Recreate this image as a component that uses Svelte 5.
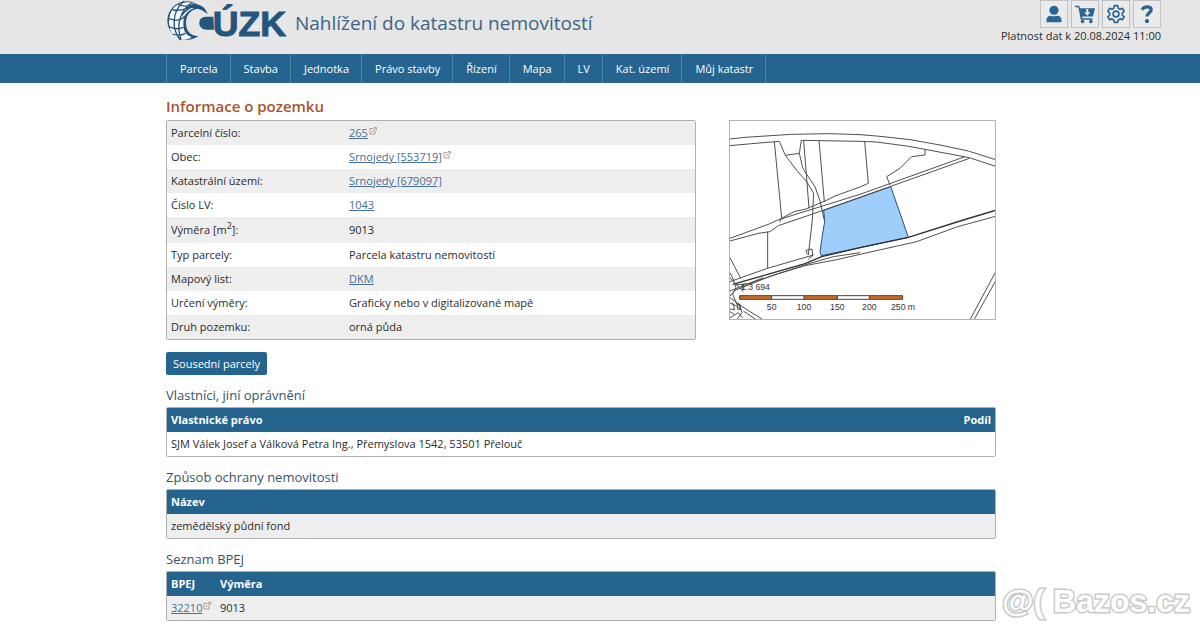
<script>
  const menu = ['Parcela', 'Stavba', 'Jednotka', 'Právo stavby', 'Řízení', 'Mapa', 'LV', 'Kat. území', 'Můj katastr'];
  const info = [
    { label: 'Parcelní číslo:', value: '265', link: true, ext: true },
    { label: 'Obec:', value: 'Srnojedy [553719]', link: true, ext: true },
    { label: 'Katastrální území:', value: 'Srnojedy [679097]', link: true },
    { label: 'Číslo LV:', value: '1043', link: true },
    { label: 'Výměra [m', sup: '2', after: ']:', value: '9013' },
    { label: 'Typ parcely:', value: 'Parcela katastru nemovitostí' },
    { label: 'Mapový list:', value: 'DKM', link: true },
    { label: 'Určení výměry:', value: 'Graficky nebo v digitalizované mapě' },
    { label: 'Druh pozemku:', value: 'orná půda' }
  ];
</script>

{#snippet external()}
  <svg class="ext" viewBox="0 0 16 16" aria-hidden="true">
    <path d="M9 3H2v11h10V7M6 10l8-8M10 1h5v5" fill="none" stroke="#b08c88" stroke-width="1.7" />
  </svg>
{/snippet}

<header>
  <a class="brand" href="#top" aria-label="ČÚZK">
    <svg viewBox="18 0 387 129">
      <circle cx="80" cy="62" r="58" fill="#24557c" />
      <path d="M90 7C52 2 27 28 27 65c0 27 13 46 33 53 15 3 27 0 35-7-18-5-26-20-25-43 1-27 18-43 44-47C108 13 100 9 90 7Z" fill="#f5f9fb" />
      <path d="M72 4C35 34 34 87 61 120M96 7C64 30 46 69 63 119M111 15C91 20 75 32 66 45M38 30c24 3 43 0 63-19M27 56c18 7 36 5 48-8M27 80c16 8 30 8 43 2M38 102c13 5 27 4 38-2M54 14c17 6 36 5 52-2" fill="none" stroke="#24557c" stroke-width="4" />
      <path d="M109 27c-20 5-31 20-31 41 0 24 13 40 38 40 10 0 20-3 28-9V46l-3-7c-7-10-18-15-32-12Z" fill="#e6e6e6" />
      <path d="M90 14c28-5 46 6 53 29-15-14-29-19-54-20Z" fill="#24557c" />
      <path d="M160 50h-22c-14 1-20 8-20 19 0 12 8 20 22 20h22Z" fill="#24557c" />
      <text x="158" y="108" class="logotext">ÚZK</text>
    </svg>
  </a>
  <h1>Nahlížení do katastru nemovitostí</h1>
  <div class="tools">
    <div class="buttons">
      <button aria-label="Přihlášení">
        <svg viewBox="0 0 24 24"><circle cx="12" cy="7.5" r="5.5" /><path d="M3 22v-2.500c0-4 2.500-5.500 5.500-5.500 2 1 5 1 7 0 3 0 5.500 1.500 5.500 5.500V22Z" /></svg>
      </button>
      <button aria-label="Košík">
        <svg viewBox="0 0 24 24"><path fill-rule="evenodd" d="M0 2h5l1 3h18l-2.500 10H8.500l.4 2H21v2H7L4 4H0ZM13.500 6v4H11l3.800 4 3.700-4H16V6Z" /><circle cx="9" cy="21" r="2.200" /><circle cx="19" cy="21" r="2.200" /></svg>
      </button>
      <button aria-label="Nastavení">
        <svg viewBox="0 0 24 24" fill="none" stroke="#2a6594" stroke-width="2"><path stroke-linejoin="round" d="M10 2h4l.7 3 2.100 1.200 3-1 2 3.500-2.300 2.200v2.300l2.300 2.100-2 3.500-3-.9-2.100 1.200L14 22h-4l-.7-2.900-2.100-1.200-3 .9-2-3.500 2.300-2.100v-2.300L2.200 8.700l2-3.500 3 1L9.300 5Z" /><circle cx="12" cy="12" r="3.500" /></svg>
      </button>
      <button aria-label="Nápověda">
        <svg viewBox="0 0 24 24"><path d="M6 7c1.500-3 4-3.500 6.500-3.500 3 0 4.500 1.500 4.500 3.500 0 3.500-5 3.500-5 8" fill="none" stroke="#2a6594" stroke-width="4" /><circle cx="12" cy="20.500" r="2.600" /></svg>
      </button>
    </div>
    <span>Platnost dat k 20.08.2024 11:00</span>
  </div>
</header>

<nav>
  {#each menu as item}
    <a href="#menu">{item}</a>
  {/each}
</nav>

<main>
  <h2 class="title">Informace o pozemku</h2>
  <div class="overview">
    <table class="info">
      <tbody>
        {#each info as row}
          <tr class:tall={row.sup}>
            <th scope="row">{row.label}{#if row.sup}<sup>{row.sup}</sup>{row.after}{/if}</th>
            <td>
              {#if row.link}<a href="#detail">{row.value}</a>{:else}{row.value}{/if}{#if row.ext}{@render external()}{/if}
            </td>
          </tr>
        {/each}
      </tbody>
    </table>

    <svg class="map" viewBox="0 0 795 594" role="img" aria-label="Mapa">
      <path d="M281 268L482 197L512 282L535 349L390 380L274 404L270 394L276 350L284 302Z" fill="#9fcefb" stroke="#24507c" stroke-width="3" />
      <g fill="none" stroke="#505050" stroke-width="3">
        <path d="M0 54L45 49L185 40L300 38L390 41L450 46L540 56L630 72L715 90L800 117" />
        <path d="M0 74L65 68L148 61L166 103L208 97L214 58L390 61L440 63L530 75L585 85L718 110L800 137" />
        <path d="M133 61L155 291" />
        <path d="M166 103L200 148L230 182L251 217L247 297L235 402" />
        <path d="M208 97L218 140L228 157L255 197L270 240L284 302" />
        <path d="M221 58L237 262M267 58L283 242" />
        <path d="M404 61L415 187L390 198L315 225L285 240L225 265L195 271L150 294L115 310L0 352" />
        <path d="M705 107L390 220L165 290L150 297V304" />
        <path d="M718 112L390 229L245 280L145 314L120 332L85 337L0 360" />
        <path d="M113 332V442" />
        <path d="M585 85V102L545 107L510 142L470 167L480 192" />
        <path d="M0 482L112 442L250 402L235 414M232 400L228 388L246 384L248 402" />
        <path stroke="#303030" stroke-width="4" d="M800 267L700 297L535 349L390 380L275 407L225 428L100 464L8 490" />
        <path d="M800 285L680 318L560 362L390 400L320 416L225 434L120 466L15 508L0 525" />
        <path d="M390 395L310 407L240 427L150 456L60 487L15 492" />
        <path d="M0 410L32 472M0 470L40 512M0 455L12 480M12 482L18 500L8 520L25 560L35 566" />
        <path d="M37 490V505M0 510L100 470M0 546L20 555M0 572L13 580M0 590L25 575L38 590M25 545L36 575L22 594M0 530L35 556L96 594M40 570L76 594M8 545L14 566L0 564" />
        <path d="M800 447L718 600M800 474L730 600" />
      </g>
      <g stroke="#444" stroke-width="3">
        <path d="M29 524H125V535H29ZM222 524H322V535H222ZM418 524H518V535H418Z" fill="#d2691e" />
        <path d="M125 524H222V535H125ZM322 524H418V535H322Z" fill="#fff" />
      </g>
      <g class="maptext">
        <text x="33" y="506">1:3 694</text>
        <text x="27" y="567" text-anchor="middle">0</text>
        <text x="125" y="567" text-anchor="middle">50</text>
        <text x="222" y="567" text-anchor="middle">100</text>
        <text x="322" y="567" text-anchor="middle">150</text>
        <text x="418" y="567" text-anchor="middle">200</text>
        <text x="483" y="567">250 m</text>
      </g>
    </svg>
  </div>

  <button class="primary">Sousední parcely</button>

  <h3>Vlastníci, jiní oprávnění</h3>
  <table class="list">
    <thead><tr><th>Vlastnické právo</th><th class="right">Podíl</th></tr></thead>
    <tbody><tr><td>SJM Válek Josef a Válková Petra Ing., Přemyslova 1542, 53501 Přelouč</td><td></td></tr></tbody>
  </table>

  <h3>Způsob ochrany nemovitosti</h3>
  <table class="list shaded">
    <thead><tr><th>Název</th></tr></thead>
    <tbody><tr><td>zemědělský půdní fond</td></tr></tbody>
  </table>

  <h3>Seznam BPEJ</h3>
  <table class="list shaded">
    <thead><tr><th class="code">BPEJ</th><th>Výměra</th></tr></thead>
    <tbody><tr><td><a href="#bpej">32210</a>{@render external()}</td><td>9013</td></tr></tbody>
  </table>
</main>

<div class="watermark">@( Bazos.cz</div>

<style>
  :global(body) {
    background: #fff;
    color: #2b2b2b;
    font: 11px/16px "Open Sans", "Noto Sans", sans-serif;
  }
  header {
    display: flex;
    align-items: flex-start;
    height: 54px;
    box-sizing: border-box;
    padding: 0 39px 0 166px;
    background: #e6e6e6;
  }
  .brand svg {
    display: block;
    width: 129px;
    height: 43px;
    overflow: visible;
  }
  .logotext {
    font: 700 107px "Liberation Sans", sans-serif;
    fill: #24557c;
    stroke: #24557c;
    stroke-width: 3px;
  }
  h1 {
    margin: 9px 0 0;
    color: #3d6485;
    font-size: 19px;
    line-height: 28px;
    font-weight: 400;
  }
  .tools {
    margin-left: auto;
    text-align: right;
  }
  .buttons {
    display: flex;
    justify-content: flex-end;
    gap: 3px;
  }
  .buttons button {
    display: grid;
    place-items: center;
    width: 28px;
    height: 28px;
    padding: 0;
    border: 1px solid #c3c3c3;
    background: #ebebeb;
  }
  .buttons svg {
    width: 20px;
    height: 20px;
    fill: #2a6594;
  }
  .buttons svg[fill='none'] {
    fill: none;
  }
  nav {
    display: flex;
    height: 29px;
    padding-left: 166px;
    background: #24648f;
  }
  nav a {
    padding: 0 12px 0 13px;
    border-right: 1px solid #4b82a8;
    color: #fff;
    line-height: 30px;
    text-decoration: none;
  }
  nav a:first-child {
    border-left: 1px solid #4b82a8;
  }
  main {
    padding: 13px 204px 10px 166px;
  }
  h2, h3 {
    margin: 0;
    font-weight: 600;
  }
  .title {
    margin-bottom: 4px;
    color: #a9532b;
    font-size: 15px;
    line-height: 20px;
  }
  h3 {
    margin: 10px 0 2px;
    color: #35536d;
    font-size: 13px;
    line-height: 20px;
    font-weight: 500;
  }
  .overview {
    display: flex;
    align-items: flex-start;
    gap: 33px;
  }
  table {
    border: 1px solid #b0b0b0;
    border-radius: 2px;
    border-spacing: 0;
  }
  th, td {
    height: 24px;
    padding: 0 4px;
    text-align: left;
    box-sizing: border-box;
  }
  .info {
    flex: 1;
  }
  .info th {
    width: 178px;
    font-weight: 400;
  }
  .info tr:nth-child(odd), .shaded td {
    background: #eee;
  }
  .tall th {
    height: 26px;
  }
  sup {
    font-size: 9px;
    line-height: 0;
  }
  td a {
    color: #456f93;
    text-decoration: underline;
  }
  .ext {
    width: 8px;
    height: 8px;
    margin-left: 1px;
    vertical-align: 2px;
  }
  .map {
    width: 265px;
    height: 198px;
    border: 1px solid #b4b4b4;
  }
  .maptext {
    font: 26px "Liberation Sans", sans-serif;
    fill: #333;
  }
  .primary {
    display: block;
    height: 23px;
    margin-top: 12px;
    padding: 0 7px;
    border: 0;
    border-radius: 2px;
    background: #24648f;
    color: #fff;
    font: inherit;
  }
  .list {
    width: 100%;
  }
  thead th {
    background: #24648f;
    color: #fff;
    font-weight: 700;
  }
  .right {
    text-align: right;
  }
  .code {
    width: 49px;
  }
  .watermark {
    position: absolute;
    right: 10px;
    bottom: 14px;
    color: #fff;
    font: 700 32px/34px "Liberation Sans", sans-serif;
    paint-order: stroke fill;
    -webkit-text-stroke: 3px #c9c9c9;
  }
</style>
